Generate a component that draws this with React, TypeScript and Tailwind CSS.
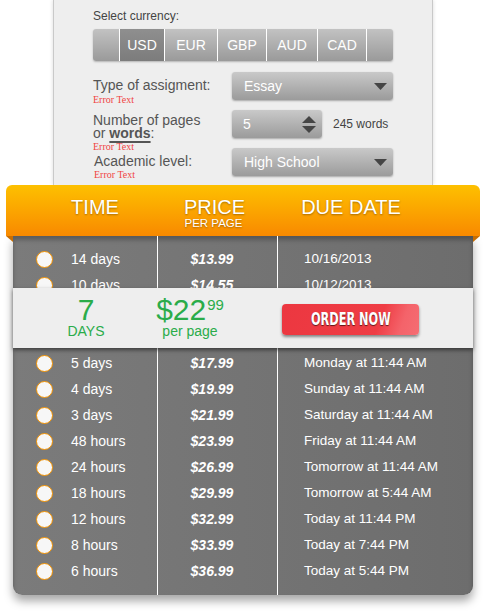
import React from 'react';

const CURRENCIES = [
  { code: '', w: 'w-[26px]' },
  { code: 'USD', w: 'w-[45px]', active: true },
  { code: 'EUR', w: 'w-[53px]' },
  { code: 'GBP', w: 'w-[49px]' },
  { code: 'AUD', w: 'w-[51px]' },
  { code: 'CAD', w: 'w-[49px]' },
  { code: '', w: 'flex-1' },
];

const TOP_ROWS = [
  { time: '14 days', price: '$13.99', due: '10/16/2013' },
  { time: '10 days', price: '$14.55', due: '10/12/2013' },
];

const ROWS = [
  { time: '5 days', price: '$17.99', due: 'Monday at 11:44 AM' },
  { time: '4 days', price: '$19.99', due: 'Sunday at 11:44 AM' },
  { time: '3 days', price: '$21.99', due: 'Saturday at 11:44 AM' },
  { time: '48 hours', price: '$23.99', due: 'Friday at 11:44 AM' },
  { time: '24 hours', price: '$26.99', due: 'Tomorrow at 11:44 AM' },
  { time: '18 hours', price: '$29.99', due: 'Tomorrow at 5:44 AM' },
  { time: '12 hours', price: '$32.99', due: 'Today at 11:44 PM' },
  { time: '8 hours', price: '$33.99', due: 'Today at 7:44 PM' },
  { time: '6 hours', price: '$36.99', due: 'Today at 5:44 PM' },
];

const Arrow = () => (
  <svg width="13" height="7" viewBox="0 0 13 7">
    <path d="M0 0h13L6.5 7z" fill="#454545" />
  </svg>
);

const Spinner = () => (
  <svg width="14" height="17" viewBox="0 0 14 17">
    <path d="M7 0l7 7H0z" fill="#454545" />
    <path d="M0 10h14l-7 7z" fill="#454545" />
  </svg>
);

const ErrorText = ({ className = '' }: { className?: string }) => (
  <div className={`text-[10px] leading-[12px] text-[#f04444] font-['Liberation_Serif',serif] ${className}`}>
    Error Text
  </div>
);

const Select = ({ value, width }: { value: string; width: string }) => (
  <div
    className={`${width} h-[28px] rounded-[3px] bg-linear-to-b from-[#c9c9c9] to-[#9b9b9b] shadow-[0_1px_2px_rgba(0,0,0,0.3)] flex items-center justify-between pl-[12px] pr-[6px] text-[14px] text-white`}
  >
    <span>{value}</span>
    <Arrow />
  </div>
);

const Row = ({ time, price, due }: { time: string; price: string; due: string }) => (
  <div className="h-[26px] flex items-center text-white text-[14px]">
    <div className="w-[144px] flex items-center pl-[23px]">
      <span className="w-[17px] h-[17px] rounded-full bg-[#f7f7f7] border-[1.5px] border-[#f39200] shrink-0" />
      <span className="ml-[18px]">{time}</span>
    </div>
    <div className="w-[120px] pr-[10px] text-center font-bold italic">{price}</div>
    <div className="pl-[27px] text-[13.5px]">{due}</div>
  </div>
);

export default function App() {
  return (
    <div className="w-[486px] h-[612px] bg-white overflow-hidden font-['Liberation_Sans',Arial,sans-serif]">
      {/* order form */}
      <div className="mx-auto w-[380px] h-[185px] bg-[#eeeeee] border-x border-[#c9c9c9] shadow-[0_0_4px_rgba(0,0,0,0.15)] pl-[39px] pt-[9px]">
        <div className="text-[12px] leading-[14px] text-[#444]">Select currency:</div>
        <div className="mt-[6px] w-[300px] h-[32px] flex rounded-[3px] overflow-hidden bg-linear-to-b from-[#c2c2c2] to-[#9a9a9a] shadow-[0_1px_2px_rgba(0,0,0,0.25)]">
          {CURRENCIES.map((c, i) => (
            <div
              key={i}
              className={`${c.w} h-full flex items-center justify-center text-[14px] text-white ${i > 0 ? 'border-l border-white' : ''} ${c.active ? 'bg-linear-to-b from-[#8f8f8f] to-[#7c7c7c]' : ''}`}
            >
              {c.code}
            </div>
          ))}
        </div>

        <div className="mt-[11px] h-[38px] flex items-start">
          <div className="w-[139px] pt-[6px]">
            <div className="text-[14px] leading-[15px] text-[#555]">Type of assigment:</div>
            <ErrorText className="mt-[1px]" />
          </div>
          <Select value="Essay" width="w-[161px]" />
        </div>

        <div className="h-[38px] flex items-start">
          <div className="w-[139px] pt-[4px]">
            <div className="text-[14px] leading-[13px] text-[#555]">
              Number of pages
              <br />
              or{' '}
              <span className="font-bold underline decoration-[1.5px] underline-offset-[3px]">words</span>:
            </div>
            <ErrorText className="mt-[1px]" />
          </div>
          <div className="w-[90px] h-[28px] rounded-[3px] bg-linear-to-b from-[#c9c9c9] to-[#9b9b9b] shadow-[0_1px_2px_rgba(0,0,0,0.3)] flex items-center justify-between pl-[11px] pr-[6px] text-[14px] text-white">
            <span>5</span>
            <Spinner />
          </div>
          <div className="ml-[11px] h-[28px] flex items-center text-[12px] text-[#444]">245 words</div>
        </div>

        <div className="h-[28px] flex items-start">
          <div className="w-[139px] pt-[6px] pl-[1px]">
            <div className="text-[14px] leading-[15px] text-[#555]">Academic level:</div>
            <ErrorText />
          </div>
          <Select value="High School" width="w-[161px]" />
        </div>
      </div>

      {/* header */}
      <div className="relative z-10 mx-auto w-[474px] h-[51px] rounded-t-[6px] bg-linear-to-b from-[#fdc000] to-[#f88900] flex pt-[12px] text-white [text-shadow:0_1px_2px_rgba(0,0,0,0.35)]">
        <div className="w-[178px] text-center text-[20px] leading-[20px]">TIME</div>
        <div className="w-[59px] text-center">
          <div className="text-[20px] leading-[20px]">PRICE</div>
          <div className="text-[11.5px] leading-[12px]">PER PAGE</div>
        </div>
        <div className="w-[216px] text-center text-[20px] leading-[20px]">DUE DATE</div>
        <svg className="absolute left-0 top-[51px]" width="7" height="6" viewBox="0 0 7 6">
          <path d="M0 0h7v6z" fill="#c86d00" />
        </svg>
        <svg className="absolute right-0 top-[51px]" width="7" height="6" viewBox="0 0 7 6">
          <path d="M0 0h7L0 6z" fill="#c86d00" />
        </svg>
      </div>

      {/* table */}
      <div className="relative mx-auto w-[460px] rounded-b-[9px] bg-linear-to-r from-[#7b7b7b] to-[#6d6d6d] shadow-[0_6px_10px_rgba(0,0,0,0.35),inset_0_4px_4px_rgba(0,0,0,0.25)] pt-[10px] pb-[11px]">
        <div className="absolute top-0 bottom-0 left-[144px] w-px bg-white" />
        <div className="absolute top-0 bottom-0 left-[264px] w-px bg-white" />

        {TOP_ROWS.map(r => (
          <Row key={r.time} {...r} />
        ))}

        <div className="relative z-10 -mt-[10px] h-[60px] bg-[#eeeeee] shadow-[0_2px_4px_rgba(0,0,0,0.5)] flex items-start pt-[8px] text-[#2aac4a]">
          <div className="ml-[23px] w-[100px] text-center">
            <div className="text-[30px] leading-[28px]">7</div>
            <div className="text-[14px] leading-[14px]">DAYS</div>
          </div>
          <div className="ml-[4px] w-[100px] text-center">
            <div className="flex justify-center items-start">
              <span className="text-[30px] leading-[28px]">$22</span>
              <span className="text-[15px] leading-[15px] mt-[1px] ml-[1px]">99</span>
            </div>
            <div className="text-[14px] leading-[14px]">per page</div>
          </div>
          <div className="ml-[42px] mt-[8px] w-[137px] h-[31px] rounded-[4px] bg-[linear-gradient(110deg,#ec3740_0%,#ef3d45_70%,#f4636a_86%,#f56d73_100%)] shadow-[0_2px_3px_rgba(0,0,0,0.45)] flex items-center justify-center">
            <span className="inline-block scale-x-[0.74] font-['DejaVu_Sans_Condensed',sans-serif] font-bold text-[17px] leading-[17px] text-white [text-shadow:0_1px_1px_rgba(0,0,0,0.6)]">
              ORDER NOW
            </span>
          </div>
        </div>

        <div className="mt-[2px]">
          {ROWS.map(r => (
            <Row key={r.time} {...r} />
          ))}
        </div>
      </div>
    </div>
  );
}
